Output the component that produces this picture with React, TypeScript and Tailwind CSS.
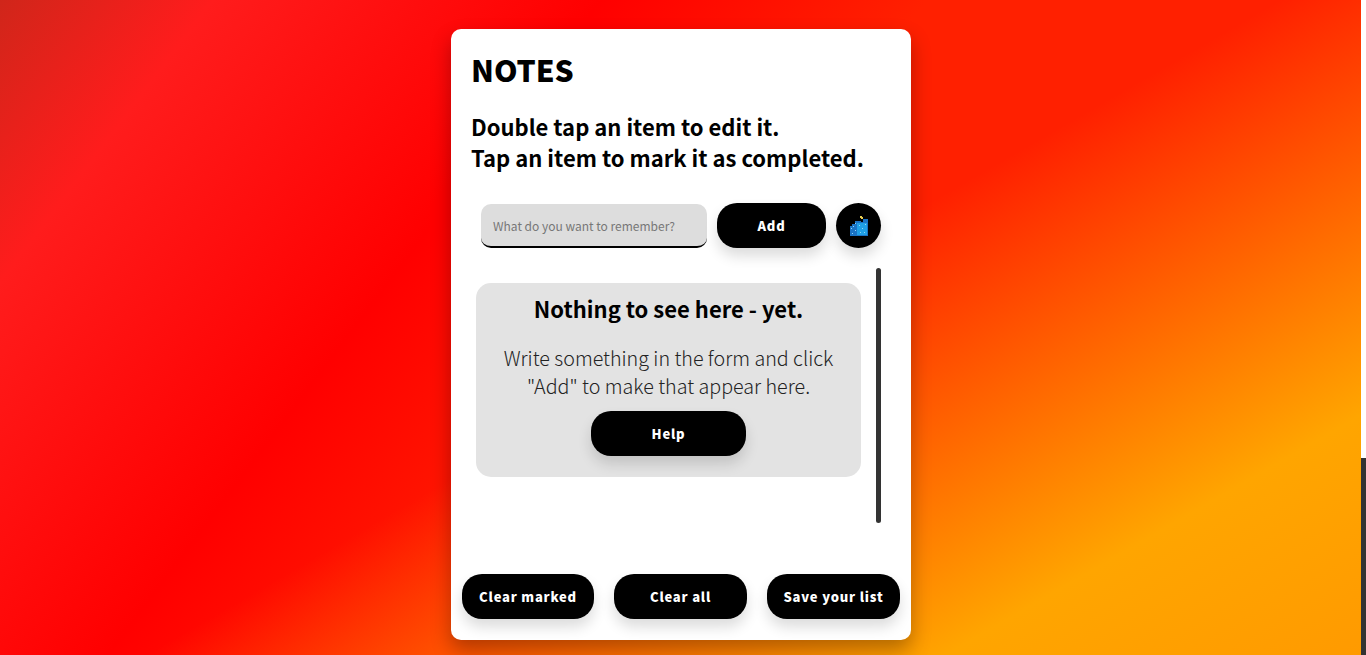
import React from 'react';

const btn =
  "h-[45px] rounded-[20px] bg-black text-white text-[13px] font-black tracking-[0.8px] shadow-[0_8px_14px_rgba(0,0,0,0.14)] flex items-center justify-center shrink-0";

function CityIcon() {
  return (
    <svg width="22" height="22" viewBox="0 0 22 22" shapeRendering="crispEdges">
      <path d="M2 21V11h2V9h3V6h6v1h2V4h5v17z" fill="#1a72c4" />
      <path d="M9 8h10v12H9z" fill="#1f9fe6" />
      <path d="M12 1h2v1h1v2h-2V3h-1z" fill="#e8cf55" />
      <path d="M3 13h1v1H3zM5 11h1v1H5zM7 15h1v1H7zM4 18h1v1H4zM7 8h1v1H7zM11 10h1v1h-1zM14 13h1v1h-1zM17 9h1v1h-1zM12 17h1v1h-1zM16 17h1v1h-1z" fill="#8fd6f5" />
    </svg>
  );
}

export default function App() {
  return (
    <div className="h-[655px] flex overflow-hidden bg-[linear-gradient(150deg,rgba(255,165,0,0)_640px,#ffa500_1040px,#ff9a00_1250px),linear-gradient(127deg,#d0261a_0px,#ff1c1c_170px,#ff0000_480px,#ff2000_740px)] font-['Noto_Sans_CJK_SC','Noto_Sans',sans-serif]">
      <div className="flex-1 flex justify-center pt-[29px] pl-px">
        <div className="w-[460px] h-[611px] bg-white rounded-[10px] shadow-[0_10px_20px_rgba(0,0,0,0.3)] flex flex-col">
          <h1 className="ml-5 mt-[20px] text-[30px] leading-[40px] font-black text-black">NOTES</h1>
          <p className="ml-5 mt-[22px] text-[22px] leading-[31px] font-bold text-black">
            Double tap an item to edit it.
            <br />
            Tap an item to mark it as completed.
          </p>
          <div className="ml-[30px] mt-[30px] flex gap-[10px]">
            <div className="w-[226px] h-[44px] mt-px bg-[#dddddd] rounded-[10px] border-b-2 border-black flex items-center pl-3 pt-[2px] text-[12px] text-[#777777]">
              What do you want to remember?
            </div>
            <button className={`${btn} w-[109px]`}>Add</button>
            <button className={`${btn} w-[45px] rounded-full`}>
              <CityIcon />
            </button>
          </div>
          <div className="mt-5 h-[255px] ml-[25px] mr-[30px] flex justify-between">
            <div className="mt-[15px] w-[385px] h-[194px] bg-[#e3e3e3] rounded-[15px] flex flex-col items-center">
              <h2 className="mt-[9px] text-[22px] leading-[32px] font-bold text-black">Nothing to see here - yet.</h2>
              <p className="mt-[20px] text-[19.7px] leading-[28px] font-light text-[#222222] text-center">
                Write something in the form and click
                <br />
                "Add" to make that appear here.
              </p>
              <button className={`${btn} w-[155px] mt-[11px]`}>Help</button>
            </div>
            <div className="w-[5px] h-full rounded-full bg-[#333333]" />
          </div>
          <div className="mt-[51px] px-[11px] flex justify-between">
            <button className={`${btn} w-[132px]`}>Clear marked</button>
            <button className={`${btn} w-[133px]`}>Clear all</button>
            <button className={`${btn} w-[133px]`}>Save your list</button>
          </div>
        </div>
      </div>
      <div className="w-[5px] h-full bg-white flex flex-col justify-end">
        <div className="h-[197px] bg-[#333333]" />
      </div>
    </div>
  );
}
